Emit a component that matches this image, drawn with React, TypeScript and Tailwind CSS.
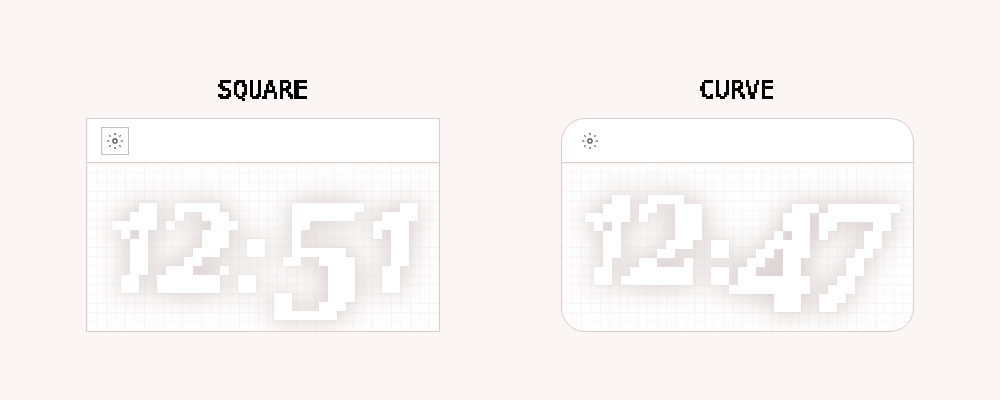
import { clsx } from 'clsx';

type Variant = 'square' | 'curve';

interface Glyph {
  char: string;
  className: string;
}

interface WidgetProps {
  title: string;
  variant: Variant;
  time: string;
  glyphs: Glyph[];
}

const squareGlyphs: Glyph[] = [
  { char: '1', className: "w-[43px] justify-center text-[120px] font-['Open_Sans',sans-serif] font-semibold" },
  { char: '2', className: "w-[87px] justify-center text-[118px] font-['DejaVu_Serif',serif]" },
  { char: ':', className: "w-[26px] justify-center text-[104px] font-['DejaVu_Sans',sans-serif]" },
  { char: '5', className: 'w-[103px] justify-center text-[184px] align-[-28px]' },
  { char: '1', className: "w-[43px] justify-center text-[120px] font-['Open_Sans',sans-serif] font-semibold" },
];

const curveGlyphs: Glyph[] = [
  { char: '1', className: "w-[42px] justify-center text-[120px] font-['Open_Sans',sans-serif] font-semibold" },
  { char: '2', className: "w-[81px] justify-center text-[118px] font-['DejaVu_Serif',serif]" },
  { char: ':', className: "w-[26px] justify-center text-[88px] font-['DejaVu_Sans',sans-serif]" },
  { char: '4', className: 'w-[88px] justify-center text-[164px] align-[-28px]' },
  { char: '7', className: 'w-[68px] justify-end text-[164px] align-[-28px]' },
];

// Samples one point per cell and grows it back to the size of the cell
function PixelFilters() {
  return (
    <svg className="absolute h-0 w-0" aria-hidden="true">
      <filter id="pixel-2" x="-5%" y="-5%" width="110%" height="110%" colorInterpolationFilters="sRGB">
        <feFlood x="1" y="1" width="1" height="1" />
        <feComposite x="0" y="0" width="2" height="2" />
        <feTile result="dots" />
        <feComposite in="SourceGraphic" in2="dots" operator="in" />
        <feComponentTransfer>
          <feFuncA type="discrete" tableValues="0 1" />
        </feComponentTransfer>
        <feMorphology operator="dilate" radius="1" />
      </filter>
      <filter id="pixel-9" x="-10%" y="-20%" width="120%" height="140%" colorInterpolationFilters="sRGB">
        <feFlood x="4" y="4" width="1" height="1" />
        <feComposite x="0" y="0" width="9" height="9" />
        <feTile result="dots" />
        <feMorphology in="SourceGraphic" operator="dilate" radius="1" result="thick" />
        <feComposite in="thick" in2="dots" operator="in" />
        <feComponentTransfer>
          <feFuncA type="discrete" tableValues="0 1" />
        </feComponentTransfer>
        <feMorphology operator="dilate" radius="4" />
      </filter>
    </svg>
  );
}

function SunIcon() {
  return (
    <svg viewBox="0 0 18 18" className="h-[18px] w-[18px]" fill="none" stroke="#444" strokeWidth="1.2">
      <circle cx="9" cy="9" r="2.1" />
      <path d="M9 1v2M9 15v2M1 9h2.4M14.6 9H17M3.4 3.4l1.2 1.2M13.4 13.4l1.2 1.2M14.6 3.4l-1.2 1.2M4.6 13.4l-1.2 1.2" />
    </svg>
  );
}

function ClockWidget({ title, variant, time, glyphs }: WidgetProps) {
  return (
    <section className="flex min-w-0 flex-col items-center">
      <h2 className="mb-3.5 font-['DejaVu_Sans_Mono',monospace] text-[25px] leading-7 font-normal text-black filter-[url(#pixel-2)]">
        {title}
      </h2>
      <div
        className={clsx(
          'w-full overflow-hidden border border-[#d8cccc] bg-white',
          variant === 'curve' && 'rounded-3xl',
        )}
      >
        <div className="flex h-11 items-center border-b border-[#d8cccc] px-3.5">
          <button
            type="button"
            aria-label="Toggle theme"
            className={clsx(
              'flex size-7 items-center justify-center border',
              variant === 'square' ? 'border-[#cdbfbf]' : 'border-transparent',
            )}
          >
            <SunIcon />
          </button>
        </div>
        <div className="flex h-42 items-center justify-center bg-[linear-gradient(to_right,#faf5f5_1px,transparent_1px),linear-gradient(to_bottom,#faf5f5_1px,transparent_1px)] [background-size:calc(100%/37)_calc(100%/18)] pt-6">
          <time
            dateTime={time}
            className="block font-['Liberation_Serif',serif] leading-none font-bold whitespace-nowrap text-white italic filter-[url(#pixel-9)_drop-shadow(0_0_1px_#e8dfdf)_drop-shadow(0_0_14px_#cfc2c2)]"
          >
            {glyphs.map((glyph, i) => (
              <span key={i} className={clsx('inline-flex leading-none', glyph.className)}>
                {glyph.char}
              </span>
            ))}
          </time>
        </div>
      </div>
    </section>
  );
}

export default function App() {
  return (
    <main className="flex min-h-screen items-center bg-[#fbf5f3] pt-2">
      <PixelFilters />
      <div className="grid w-full grid-cols-2 gap-[121px] px-[86px]">
        <ClockWidget title="SQUARE" variant="square" time="12:51" glyphs={squareGlyphs} />
        <ClockWidget title="CURVE" variant="curve" time="12:47" glyphs={curveGlyphs} />
      </div>
    </main>
  );
}
